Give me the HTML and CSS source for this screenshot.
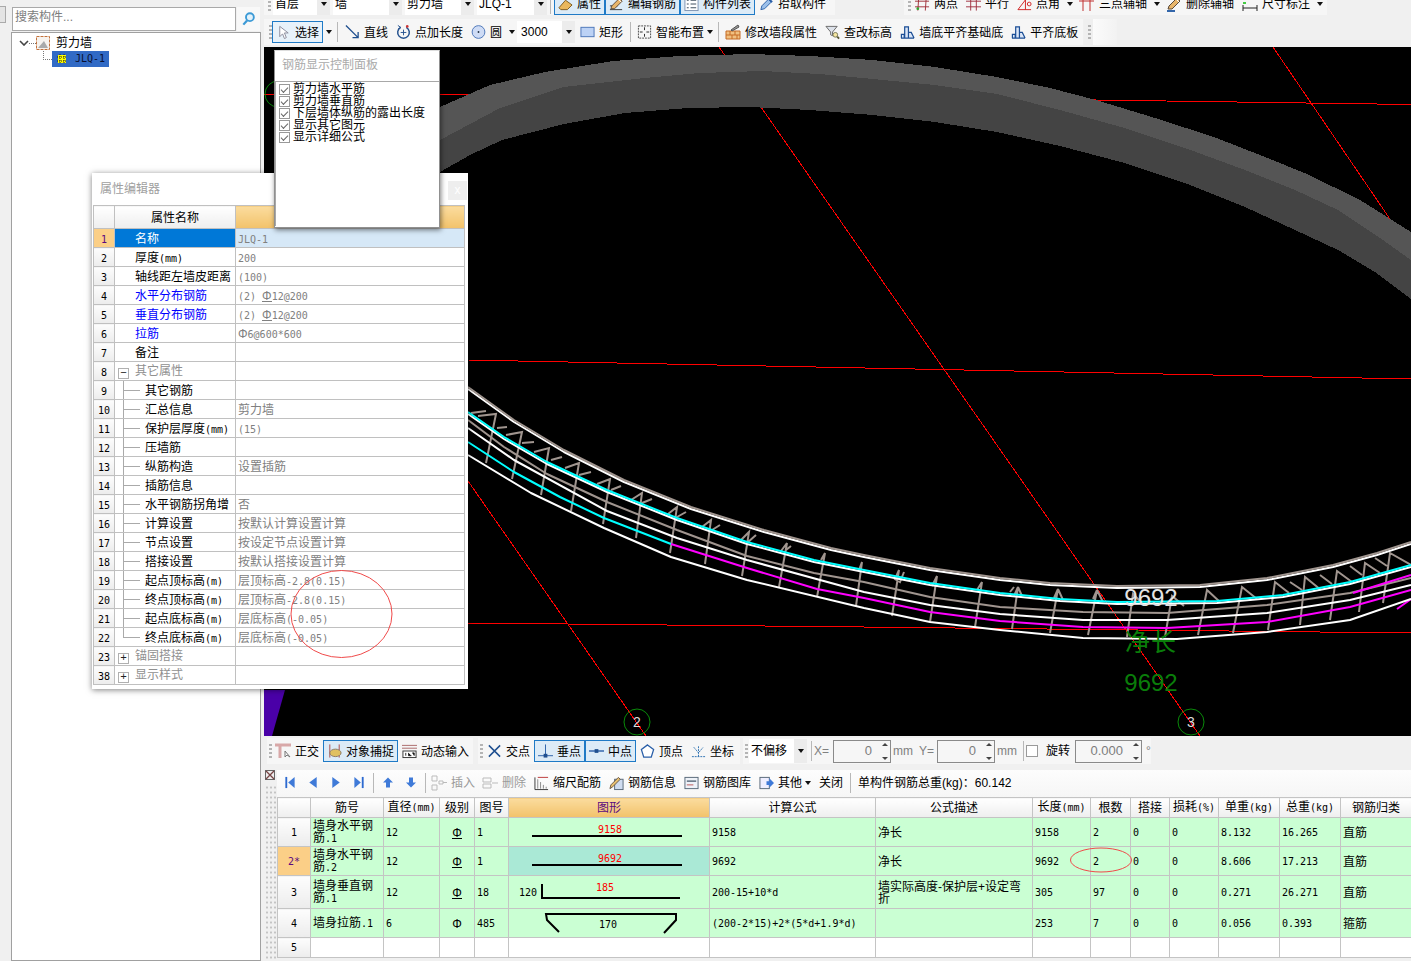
FILE: index.html
```html
<!DOCTYPE html>
<html lang="zh-CN">
<head>
<meta charset="utf-8">
<title>钢筋编辑</title>
<link rel="stylesheet" href="styles.css">
</head>
<body>
<svg class="defs" width="0" height="0" aria-hidden="true">
  <symbol id="i-wall" viewBox="0 0 16 16"><path d="M1 14.5h14M1.5 14.5v-4h3v4M5 14.5V2.5h4v12M9 14.5v-6h3l3 6" fill="#dbe6f7" stroke="#1d4f96" stroke-width="1.3"/></symbol>
  <symbol id="i-pen" viewBox="0 0 16 16"><path d="M2 13l1-3 8-8 3 3-8 8z" fill="#e8b56a" stroke="#5a4a3a"/><path d="M10 3l3 3" stroke="#fff"/></symbol>
</svg>

<aside class="side">
  <div class="strip"><div class="stub"></div></div>
  <div class="nav-panel">
    <div class="search">
      <div class="search-box">搜索构件...</div>
      <div class="search-btn"><svg class="ic" viewBox="0 0 16 16"><circle cx="9.5" cy="6" r="4.2" fill="#e3f2fb" stroke="#3c9ad6" stroke-width="2"/><path d="M6.5 9.5L2.5 14" stroke="#3c9ad6" stroke-width="2.4"/></svg></div>
    </div>
    <div class="tree">
      <div class="tree-root">
        <svg class="chev" viewBox="0 0 10 6"><path d="M1 1l4 4 4-4" fill="none" stroke="#444" stroke-width="1.6"/></svg>
        <span class="dots"></span>
        <svg class="ic14" viewBox="0 0 14 14"><rect x=".5" y=".5" width="13" height="13" fill="#f7f3ee" stroke="#c2703a" stroke-dasharray="3 1"/><path d="M2 12L8 5l4 7z" fill="#aaa"/></svg>
        <span class="tree-name">剪力墙</span>
      </div>
      <div class="tree-child">
        <span class="elbow"></span>
        <div class="tree-sel">
          <svg class="ic10" viewBox="0 0 10 10"><rect x="1" y="1" width="8" height="8" fill="#ff0"/><path d="M3 0v10M7 0v10M0 3h10M0 7h10" stroke="#222" stroke-dasharray="1 1"/></svg>
          <span class="n tree-id">JLQ-1</span>
        </div>
      </div>
    </div>
  </div>
</aside>

<main class="main">
  <div class="tb1">
    <div class="group g1a">
      <span class="grip"></span>
      <div class="combo w57 ml2"><span>首层</span><i class="drop"></i></div>
      <div class="combo w69 ml3"><span>墙</span><i class="drop"></i></div>
      <div class="combo w69 ml3"><span>剪力墙</span><i class="drop"></i></div>
      <div class="combo w70 ml3"><span>JLQ-1</span><i class="drop"></i></div>
      <span class="sep"></span>
      <div class="tool on"><svg class="ic" viewBox="0 0 16 16"><path d="M1 12l7-8 7 5-5 5H3z" fill="#e9b75c" stroke="#7a5a20"/></svg>属性</div>
      <div class="tool on"><svg class="ic" viewBox="0 0 16 16"><path d="M1 14h13M1 10h8" stroke="#333"/><use href="#i-pen"/></svg>编辑钢筋</div>
      <div class="tool on"><svg class="ic" viewBox="0 0 16 16"><rect x="1" y="1" width="14" height="14" fill="#fff" stroke="#7a90b0"/><path d="M3 4h2M3 8h2M3 12h2M7 4h6M7 8h6M7 12h6" stroke="#345"/></svg>构件列表</div>
      <div class="tool"><svg class="ic" viewBox="0 0 16 16"><path d="M2 14l1-4 7-7 3 3-7 7z" fill="#9cc0ea" stroke="#2a5fa8"/><path d="M10 2l4 4" stroke="#2a5fa8" stroke-width="2"/></svg>拾取构件</div>
    </div>
    <div class="group g1b">
      <span class="grip"></span>
      <div class="tool"><svg class="ic" viewBox="0 0 16 16"><path d="M4 1l-1 14M12 1l-1 14M0 5h15M0 11h15" stroke="#a0303a"/><circle cx="3" cy="13" r="1.5" fill="#3a3"/></svg>两点</div>
      <div class="tool"><svg class="ic" viewBox="0 0 16 16"><path d="M5 1v14M11 1v14M0 5h16M0 11h16" stroke="#a03040"/></svg>平行</div>
      <div class="tool"><svg class="ic" viewBox="0 0 16 16"><path d="M1 14L11 1M1 14h14M9 1v13" stroke="#d02020"/><circle cx="13" cy="8" r="2" fill="none" stroke="#d02020"/></svg>点角</div>
      <i class="arrow"></i>
      <div class="tool"><svg class="ic i16" viewBox="0 0 16 16"><path d="M4 1v14M11 1v14M0 5h15" stroke="#c03030"/></svg>三点辅轴</div>
      <i class="arrow"></i>
      <div class="tool"><svg class="ic i16" viewBox="0 0 16 16"><use href="#i-pen"/><path d="M1 15h8" stroke="#36a" stroke-width="2"/></svg>删除辅轴</div>
      <div class="tool"><svg class="ic i16" viewBox="0 0 16 16"><path d="M1 9v6M15 9v6M1 12h14" stroke="#222"/><rect x="1" y="1" width="3" height="3" fill="#4c4"/><rect x="1" y="6" width="3" height="2" fill="#4c4"/></svg>尺寸标注</div>
      <i class="arrow"></i>
    </div>
  </div>

  <div class="tb2">
    <div class="group g2a">
      <span class="grip"></span>
      <div class="tool on sel"><svg class="ic" viewBox="0 0 16 16"><path d="M4 2v11l3-3 2 5 2-1-2-5h4z" fill="#fff" stroke="#8a8a9a"/></svg>选择</div>
      <i class="arrow"></i>
      <span class="sep"></span>
      <div class="tool"><svg class="ic" viewBox="0 0 16 16"><path d="M1 1l13 13M14 8v6H8" fill="none" stroke="#1f4f8f" stroke-width="1.4"/></svg>直线</div>
      <div class="tool"><svg class="ic" viewBox="0 0 16 16"><path d="M5 3a6.2 6.2 0 1 0 6 0" fill="none" stroke="#25528f" stroke-width="1.6"/><path d="M5 8.500h6M8 5.500v6" stroke="#25528f"/><path d="M2 1l3 2-3 2" fill="none" stroke="#25528f"/><circle cx="12" cy="2" r="1.400" fill="#c33"/></svg>点加长度</div>
      <div class="tool"><svg class="ic" viewBox="0 0 16 16"><circle cx="8" cy="8" r="6.800" fill="#cfdcf5" stroke="#4a74b8"/><circle cx="8" cy="8" r="1" fill="#234"/></svg>圆</div>
      <i class="arrow"></i>
      <div class="combo w58"><span>3000</span><i class="drop"></i></div>
      <div class="tool ml1"><svg class="ic" viewBox="0 0 16 16"><rect x="1" y="3" width="14" height="10" fill="#bcd2f5" stroke="#4a74b8"/></svg>矩形</div>
      <span class="sep sep2"></span>
      <div class="tool np"><svg class="ic" viewBox="0 0 16 16"><rect x="1.500" y="1.500" width="13" height="13" fill="none" stroke="#444" stroke-dasharray="2 1"/><path d="M8 3v3M8 10v3M3 8h3M10 8h3" stroke="#222"/></svg>智能布置</div>
      <i class="arrow"></i>
      <span class="sep sep2"></span>
      <div class="tool"><svg class="ic i16" viewBox="0 0 16 16"><path d="M1 7h14v8H1z" fill="#f0c080" stroke="#c56a25"/><path d="M1 11h14M5 7v4M10 7v4M7 11v4M12 11v4" stroke="#c56a25"/><path d="M6 6l7-5 1 2-7 4z" fill="#999" stroke="#555"/></svg>修改墙段属性</div>
      <div class="tool"><svg class="ic" viewBox="0 0 16 16"><path d="M1 2h12L8 8v4L6 11V8z" fill="#dde2ea" stroke="#666"/><circle cx="11" cy="11" r="2.500" fill="#f5e6a0" stroke="#775"/><path d="M13 13l2 2" stroke="#553" stroke-width="2"/></svg>查改标高</div>
      <div class="tool"><svg class="ic" viewBox="0 0 16 16"><use href="#i-wall"/></svg>墙底平齐基础底</div>
      <div class="tool"><svg class="ic" viewBox="0 0 16 16"><use href="#i-wall"/></svg>平齐底板</div>
    </div>
    <div class="group g2b"><span class="grip"></span><span class="blank"></span></div>
  </div>

  <div class="canvas">
    <svg class="scene" width="1147" height="689" viewBox="264 47 1147 689">
      <g class="red">
        <path d="M719 47L1200 736M1273 47L1411 250M468 481L646 736"/>
        <path d="M264 94H440L1096 100 1411 104.500M468 360L1411 379M468 623L864 627 1411 633"/>
      </g>
      <circle class="ring" cx="278" cy="94" r="13"/>
      <polygon class="purple" points="264,690 285,690 272,736 264,736"/>
      <path class="band-top" d="M440 107L490 85 545 72 613 61 680 56 750 54 810 56 873 60 935 67 997 77 1050 88 1096 100 1155 118 1214 137 1260 155 1307 174 1360 200 1411 232V260L1380 238 1338 210 1295 190 1245 170 1185 148 1121 127 1060 110 997 94 935 85 873 79 820 74 762 71 700 73 644 78 564 87 500 108 440 140z"/>
      <path class="band-low" d="M440 140L500 108 564 87 644 78 700 73 762 71 820 74 873 79 935 85 997 94 1060 110 1121 127 1185 148 1245 170 1295 190 1338 210 1380 238 1411 260V299L1375 272 1338 250 1295 230 1245 207 1185 183 1121 162 1060 146 997 132 935 122 873 115 810 110 750 107 688 108 625 113 564 124 502 140 470 155 440 172z"/>

      <path class="tie" d="M486 463L496 414l-18 2M471 413l15-2M512 479L522 432l-16 3M497 428l10-1M541 495L549 448l-15 4M522 443l12-1M571 511L579 463l-14 5M551 460l11-3M603 524L610 479l-13 5M579 475l12-3M636 538L642 493l-11 7M611 490l10-4M670 553L677 507l-9 7M642 503l10-4M705 564L711 520l-9 7M677 517l9-5M742 576L749 532l-8 8M712 530l8-5M779 587L787 543l-6 8M747 543l9-8M817 597L825 553l-4 7M786 550l5-4M856 606L862 562l-3 8M892 616L899 570l-4 9 5 3 4-10M930 622L937 576l-5 10M975 627L982 582l-5 8M1012 629L1018 587l-4 9M1018 587l4 9M1010 592l4-5M1050 633L1058 589l-4 9M1058 589l5 11M1088 635L1097 590l-4 9M1097 590l6 12M1127 637L1133 594l9 9M1165 637L1172 596l12 10M1198 635L1207 590l13 12M1233 633L1242 587l15 12M1268 630L1275 582l14 11M1290 582l12 8M1300 625L1305 577l16 13M1320 575l12 9M1330 620L1337 571l15 11M1350 566l12 9M1359 612L1365 563l15 10M1375 558l12 8M1383 603L1390 553l21 12"/>

      <polyline class="wh3" points="468,389 514,422 564,452 624,482 691,509 764,532 831,550 864,557 930,570 1000,580 1050,585 1117,588 1200,587 1267,580 1333,567 1377,555 1411,544"/>
      <polyline class="grey" points="468,387 514,420 564,450 624,480 691,507 764,530 831,548 864,555 930,568 1000,578 1050,583 1117,586 1200,585 1267,578 1333,565 1377,553 1411,542"/>
      <polyline class="wh" points="468,414 504,439 547,464 607,492 677,520 747,544 814,562 864,572 930,585 1000,595 1060,601 1117,604 1217,603 1283,597 1350,584 1411,567"/>
      <polyline class="cy" points="468,412 504,437 547,462 607,490 677,518 747,542 814,560 864,570 930,583 1000,593 1060,599 1117,602 1217,601 1283,595 1350,582 1411,565"/>
      <polyline class="grey" points="468,420 504,447 547,474 607,502 677,530 747,556 814,573 864,582 930,597 1000,607 1083,612 1167,613 1267,605 1350,593 1411,578"/>
      <polyline class="wh" points="468,428 514,460 607,511 677,538 747,560 864,592 930,605 1000,614 1083,620 1167,620 1267,613 1350,600 1411,585"/>
      <polyline class="cy" points="468,442 514,472 560,497 604,518 671,544"/>
      <polyline class="mg" points="671,544 747,568 817,589 864,598 930,612 1000,621 1083,627 1167,628 1267,622 1350,607 1411,590"/>
      <polyline class="mg" points="1353,593 1411,575"/>
      <polyline class="mg" points="1397,609 1411,599"/>
      <polyline class="wh" points="468,455 531,493 604,528 671,557 747,580 864,608 930,622 1000,630 1083,638 1177,639 1267,632 1350,620 1411,599"/>

      <text class="dim" x="1151" y="606">9692</text>
      <text class="lbl" x="1151" y="651">净长</text>
      <text class="lbl digits" x="1151" y="691">9692</text>
      <circle class="ring" cx="637" cy="722" r="13"/>
      <circle class="ring" cx="1191" cy="722" r="13"/>
      <text class="axis" x="637" y="727">2</text>
      <text class="axis" x="1191" y="727">3</text>
    </svg>
  </div>

  <div class="tb3">
    <div class="group g3a">
      <span class="grip tight"></span>
      <div class="tool"><svg class="ic i16" viewBox="0 0 16 16"><path d="M0 2h16M5 2v13" stroke="#d8a8a8" stroke-width="3"/><path d="M10 8v6l2-2 3 2z" fill="#fff" stroke="#777"/></svg>正交</div>
      <div class="tool on"><svg class="ic" viewBox="0 0 16 16"><path d="M3 1v14M13 1v14" stroke="#a44"/><ellipse cx="9" cy="10" rx="6" ry="4" fill="#e0c060" stroke="#876"/></svg>对象捕捉</div>
      <div class="tool"><svg class="ic" viewBox="0 0 16 16"><path d="M0 2h16M0 5h16" stroke="#a66"/><rect x="1" y="8" width="14" height="7" fill="#fff" stroke="#333"/><path d="M4 10v3M7 10v3h3M11 10h2v3" stroke="#222"/></svg>动态输入</div>
    </div>
    <div class="group g3b">
      <span class="grip"></span>
      <div class="tool"><svg class="ic" viewBox="0 0 16 16"><path d="M2 2l12 12M14 2L2 14" stroke="#1f4f8f" stroke-width="1.600"/></svg>交点</div>
      <div class="tool on"><svg class="ic" viewBox="0 0 16 16"><path d="M0 13h16M8 1v12" stroke="#2a5fa8"/><rect x="6" y="11" width="4" height="4" fill="#1f4f8f"/></svg>垂点</div>
      <div class="tool on"><svg class="ic" viewBox="0 0 16 16"><path d="M0 8h16" stroke="#2a5fa8" stroke-width="1.500"/><rect x="6" y="6" width="4" height="4" fill="#1f4f8f"/></svg>中点</div>
      <div class="tool"><svg class="ic" viewBox="0 0 16 16"><path d="M8 1.500l6.500 5-2.500 8H4l-2.500-8z" fill="#fff" stroke="#2a5fa8" stroke-width="1.400"/></svg>顶点</div>
      <div class="tool"><svg class="ic" viewBox="0 0 16 16"><path d="M1 14h14M8 14V2M3 4l5 6 5-6" fill="none" stroke="#2a6fb0" stroke-dasharray="2 1"/></svg>坐标</div>
    </div>
    <div class="group g3c">
      <span class="grip"></span>
      <div class="combo w58 ml1 tall"><span>不偏移</span><i class="drop"></i></div>
      <span class="sep sep2 ml4"></span>
      <span class="mute">X=</span>
      <div class="spin w58 ml4"><span class="val">0</span><span class="spins"><i class="up"></i><i class="dn"></i></span></div>
      <span class="mute ml2">mm</span>
      <span class="mute ml6">Y=</span>
      <div class="spin w58 ml3"><span class="val">0</span><span class="spins"><i class="up"></i><i class="dn"></i></span></div>
      <span class="mute ml2">mm</span>
      <span class="sep sep2 ml6"></span>
      <span class="check"></span>
      <span class="label ml8">旋转</span>
      <div class="spin w67 ml5"><span class="val">0.000</span><span class="spins"><i class="up"></i><i class="dn"></i></span></div>
      <span class="mute ml4">°</span>
    </div>
  </div>

  <div class="lower">
    <div class="dock">
      <svg class="dock-x" viewBox="0 0 10 10"><rect x=".5" y=".5" width="9" height="9" fill="#eee" stroke="#666"/><path d="M1 1l8 8M9 1L1 9" stroke="#744" stroke-width="1.300"/></svg>
      <div class="dock-dots"></div>
    </div>
    <div class="sheet">
      <div class="tb4">
        <div class="nav"><svg class="ic10" viewBox="0 0 10 14"><path d="M1 1v12" stroke="#2d6ad0" stroke-width="2"/><path d="M10 1L3 7l7 6z" fill="#3f7ad8"/></svg></div>
        <div class="nav"><svg class="ic10" viewBox="0 0 10 14"><path d="M9 1L1 7l8 6z" fill="#3f7ad8"/></svg></div>
        <div class="nav"><svg class="ic10" viewBox="0 0 10 14"><path d="M1 1l8 6-8 6z" fill="#3f7ad8"/></svg></div>
        <div class="nav"><svg class="ic10" viewBox="0 0 10 14"><path d="M9 1v12" stroke="#2d6ad0" stroke-width="2"/><path d="M0 1l7 6-7 6z" fill="#3f7ad8"/></svg></div>
        <span class="sep sep2"></span>
        <div class="nav"><svg class="ic10" viewBox="0 0 10 10"><path d="M5 0l5 5H7v5H3V5H0z" fill="#3f7ad8"/></svg></div>
        <div class="nav"><svg class="ic10" viewBox="0 0 10 10"><path d="M5 10l5-5H7V0H3v5H0z" fill="#3f7ad8"/></svg></div>
        <span class="sep sep2"></span>
        <div class="tool gray mln1"><svg class="ic i16" viewBox="0 0 16 16"><path d="M1 1h5v5H1zM1 10h5v5H1zM8 6h4v3H8zM12 7.500h4" fill="none" stroke="#bbb"/></svg>插入</div>
        <div class="tool gray mln1"><svg class="ic i16" viewBox="0 0 16 16"><path d="M1 3h8v4H1zM1 9h8v4H1zM10 8h6" fill="none" stroke="#bbb"/></svg>删除</div>
        <div class="tool"><svg class="ic" viewBox="0 0 16 16"><path d="M1 2v13h14" fill="none" stroke="#333"/><path d="M4 4v10M7 7v7M10 10v4M13 12v2" stroke="#888"/><path d="M4 2h11" stroke="#b33"/></svg>缩尺配筋</div>
        <div class="tool"><svg class="ic" viewBox="0 0 16 16"><rect x="6" y="4" width="9" height="11" fill="#cfdcf0" stroke="#567"/><path d="M1 14l1-4 8-8 2 2-8 8z" fill="#e8c070" stroke="#654"/></svg>钢筋信息</div>
        <div class="tool"><svg class="ic" viewBox="0 0 16 16"><rect x="1" y="2" width="14" height="12" fill="#eef2f8" stroke="#567"/><path d="M3 6h10" stroke="#567" stroke-width="1.500"/><path d="M3 10h7" stroke="#b55"/></svg>钢筋图库</div>
        <div class="tool np"><svg class="ic" viewBox="0 0 16 16"><rect x="1" y="2" width="10" height="12" fill="#eef" stroke="#567"/><path d="M8 6h3V3l5 5-5 5v-3H8z" fill="#3f7ad8"/></svg>其他</div>
        <i class="arrow"></i>
        <div class="tool ml2">关闭</div>
        <span class="sep"></span>
        <span class="total">单构件钢筋总重(kg)：60.142</span>
      </div>

      <table class="bars">
        <colgroup><col class="c33"><col class="c73"><col class="c56"><col class="c35"><col class="c34"><col class="c201"><col class="c166"><col class="c157"><col class="c58"><col class="c40"><col class="c39"><col class="c49"><col class="c61"><col class="c61"><col class="c71"></colgroup>
        <thead>
          <tr class="rh">
            <th></th><th>筋号</th><th>直径<span class="n">(mm)</span></th><th>级别</th><th>图号</th><th class="hot">图形</th><th>计算公式</th><th>公式描述</th><th>长度<span class="n">(mm)</span></th><th>根数</th><th>搭接</th><th>损耗<span class="n">(%)</span></th><th>单重<span class="n">(kg)</span></th><th>总重<span class="n">(kg)</span></th><th>钢筋归类</th>
          </tr>
        </thead>
        <tbody>
          <tr class="r29 data">
            <td class="num">1</td><td class="nm lh">墙身水平钢<br>筋<span class="n">.1</span></td><td class="n bl">12</td><td class="ctr"><span class="rb foot">Φ</span></td><td class="n">1</td>
            <td class="pic"><svg width="200" height="28" viewBox="509 818 200 28"><path class="bar" d="M532 836H682"/><text class="rd" x="610" y="833">9158</text></svg></td>
            <td class="n">9158</td><td>净长</td><td class="n">9158</td><td class="n">2</td><td class="n">0</td><td class="n">0</td><td class="n">8.132</td><td class="n">16.265</td><td>直筋</td>
          </tr>
          <tr class="r29 data">
            <td class="num cur">2*</td><td class="nm lh">墙身水平钢<br>筋<span class="n">.2</span></td><td class="n bl">12</td><td class="ctr"><span class="rb foot">Φ</span></td><td class="n">1</td>
            <td class="pic selcell"><svg width="200" height="28" viewBox="509 847 200 28"><path class="bar" d="M532 865H682"/><text class="rd" x="610" y="862">9692</text></svg></td>
            <td class="n">9692</td><td>净长</td><td class="n">9692</td><td class="n">2</td><td class="n">0</td><td class="n">0</td><td class="n">8.606</td><td class="n">17.213</td><td>直筋</td>
          </tr>
          <tr class="r33 data">
            <td class="num">3</td><td class="nm lh">墙身垂直钢<br>筋<span class="n">.1</span></td><td class="n bl">12</td><td class="ctr"><span class="rb foot">Φ</span></td><td class="n">18</td>
            <td class="pic"><svg width="200" height="32" viewBox="509 876 200 32"><path class="bar" d="M542 884V898H680"/><text class="bk" x="528" y="896">120</text><text class="rd" x="605" y="891">185</text></svg></td>
            <td class="n">200-15+10*d</td><td class="lh">墙实际高度-保护层+设定弯<br>折</td><td class="n">305</td><td class="n">97</td><td class="n">0</td><td class="n">0</td><td class="n">0.271</td><td class="n">26.271</td><td>直筋</td>
          </tr>
          <tr class="r29 data">
            <td class="num">4</td><td class="nm">墙身拉筋<span class="n">.1</span></td><td class="n bl">6</td><td class="ctr"><span class="rb">Φ</span></td><td class="n">485</td>
            <td class="pic"><svg width="200" height="28" viewBox="509 909 200 28"><path class="bar" d="M559 932L547 920 546 914H676V920L664 933"/><text class="bk" x="608" y="928">170</text></svg></td>
            <td class="n">(200-2*15)+2*(5*d+1.9*d)</td><td></td><td class="n">253</td><td class="n">7</td><td class="n">0</td><td class="n">0</td><td class="n">0.056</td><td class="n">0.393</td><td>箍筋</td>
          </tr>
          <tr class="r20">
            <td class="num">5</td><td></td><td class="bl"></td><td></td><td></td><td></td><td></td><td></td><td></td><td></td><td></td><td></td><td></td><td></td><td></td>
          </tr>
        </tbody>
      </table>
    </div>
  </div>
</main>

<section class="dialog">
  <div class="dlg-title"><span>属性编辑器</span><span class="dlg-close">x</span></div>
  <table class="props">
    <colgroup><col class="p21"><col class="p121"><col class="p229"></colgroup>
    <thead><tr class="ph"><th></th><th>属性名称</th><th class="hot"></th></tr></thead>
    <tbody>
      <tr class="sel-row"><td class="num cur">1</td><td class="pn on-name">名称</td><td class="pv n">JLQ-1</td></tr>
      <tr><td class="num">2</td><td class="pn">厚度<span class="n">(mm)</span></td><td class="pv n">200</td></tr>
      <tr><td class="num">3</td><td class="pn">轴线距左墙皮距离</td><td class="pv n">(100)</td></tr>
      <tr><td class="num">4</td><td class="pn link">水平分布钢筋</td><td class="pv n">(2) <span class="rb foot">Φ</span>12@200</td></tr>
      <tr><td class="num">5</td><td class="pn link">垂直分布钢筋</td><td class="pv n">(2) <span class="rb foot">Φ</span>12@200</td></tr>
      <tr><td class="num">6</td><td class="pn link">拉筋</td><td class="pv n"><span class="rb">Φ</span>6@600*600</td></tr>
      <tr><td class="num">7</td><td class="pn">备注</td><td class="pv"></td></tr>
      <tr><td class="num">8</td><td class="pg"><span class="box">−</span>其它属性</td><td class="pv"></td></tr>
      <tr><td class="num">9</td><td class="pt">其它钢筋</td><td class="pv"></td></tr>
      <tr><td class="num">10</td><td class="pt">汇总信息</td><td class="pv">剪力墙</td></tr>
      <tr><td class="num">11</td><td class="pt">保护层厚度<span class="n">(mm)</span></td><td class="pv n">(15)</td></tr>
      <tr><td class="num">12</td><td class="pt">压墙筋</td><td class="pv"></td></tr>
      <tr><td class="num">13</td><td class="pt">纵筋构造</td><td class="pv">设置插筋</td></tr>
      <tr><td class="num">14</td><td class="pt">插筋信息</td><td class="pv"></td></tr>
      <tr><td class="num">15</td><td class="pt">水平钢筋拐角增</td><td class="pv">否</td></tr>
      <tr><td class="num">16</td><td class="pt">计算设置</td><td class="pv">按默认计算设置计算</td></tr>
      <tr><td class="num">17</td><td class="pt">节点设置</td><td class="pv">按设定节点设置计算</td></tr>
      <tr><td class="num">18</td><td class="pt">搭接设置</td><td class="pv">按默认搭接设置计算</td></tr>
      <tr><td class="num">19</td><td class="pt">起点顶标高<span class="n">(m)</span></td><td class="pv">层顶标高<span class="n">-2.8(0.15)</span></td></tr>
      <tr><td class="num">20</td><td class="pt">终点顶标高<span class="n">(m)</span></td><td class="pv">层顶标高<span class="n">-2.8(0.15)</span></td></tr>
      <tr><td class="num">21</td><td class="pt">起点底标高<span class="n">(m)</span></td><td class="pv">层底标高<span class="n">(-0.05)</span></td></tr>
      <tr><td class="num">22</td><td class="pt end">终点底标高<span class="n">(m)</span></td><td class="pv">层底标高<span class="n">(-0.05)</span></td></tr>
      <tr><td class="num">23</td><td class="pg"><span class="box">+</span>锚固搭接</td><td class="pv"></td></tr>
      <tr><td class="num">38</td><td class="pg"><span class="box">+</span>显示样式</td><td class="pv"></td></tr>
    </tbody>
  </table>
</section>

<section class="panel">
  <div class="panel-title">钢筋显示控制面板</div>
  <ul class="checks">
    <li><span class="cb"></span>剪力墙水平筋</li>
    <li><span class="cb"></span>剪力墙垂直筋</li>
    <li><span class="cb"></span>下层墙体纵筋的露出长度</li>
    <li><span class="cb"></span>显示其它图元</li>
    <li><span class="cb"></span>显示详细公式</li>
  </ul>
</section>

<svg class="marks" width="1411" height="961" viewBox="0 0 1411 961" aria-hidden="true">
  <ellipse cx="341.500" cy="614" rx="50.500" ry="43.500"/>
  <ellipse cx="1101" cy="860" rx="30.500" ry="12"/>
</svg>
</body>
</html>
```
FILE: styles.css
```css
* { box-sizing: border-box; }
html, body { margin: 0; padding: 0; }
body {
  position: relative;
  display: flex;
  width: 1411px;
  height: 961px;
  overflow: hidden;
  background: #f0f0f0;
  color: #000;
  font: 12px/16px "Liberation Sans", "Noto Sans CJK SC", sans-serif;
}
.defs { position: absolute; }
.n { font-family: "DejaVu Sans Mono", "Noto Sans CJK SC", monospace; font-size: 10px; }
.ic { flex: none; width: 15px; height: 16px; }
.i16 { width: 16px; }
.ic14 { flex: none; width: 14px; height: 14px; }
.ic10 { flex: none; width: 10px; height: 10px; }

/* left tree */
.side { flex: none; display: flex; width: 264px; }
.strip { flex: none; width: 11px; }
.stub { width: 6px; height: 17px; margin-top: 6px; background: #e4e4e4; border: 1px solid #aaa; border-left: 0; }
.nav-panel { flex: none; width: 250px; display: flex; flex-direction: column; }
.search { display: flex; height: 24px; margin: 7px 0 1px 1px; gap: 1px; }
.search-box { width: 224px; padding: 0 2px; border: 1px solid #a9a9a9; background: #fff; color: #7d7d7d; font-size: 12px; line-height: 19px; }
.search-btn { width: 23px; display: flex; align-items: center; justify-content: center; background: #f8f8f8; }
.tree { flex: 1; background: #fff; border: 1px solid #a0a0a0; padding-top: 3px; }
.tree-root { display: flex; align-items: center; height: 14px; padding-left: 7px; }
.chev { width: 10px; height: 6px; flex: none; }
.dots { width: 7px; height: 0; border-top: 1px dotted #777; }
.tree-name { margin-left: 6px; }
.tree-child { display: flex; margin-top: 1px; height: 16px; padding-left: 31px; }
.elbow { width: 9px; height: 9px; border-left: 1px dotted #777; border-bottom: 1px dotted #777; }
.tree-sel { display: flex; align-items: center; width: 57px; height: 16px; padding-left: 5px; background: #316ac5; }
.tree-id { margin-left: 8px; color: #0a1030; }

/* main column */
.main { flex: none; width: 1147px; display: flex; flex-direction: column; }
.group { display: flex; align-items: center; background: #f6f6f6; }
.grip { flex: none; width: 3px; height: 14px; margin-left: 2px; background: repeating-linear-gradient(#b4b4b4 0 2px, transparent 2px 4px); }
.grip.tight { margin-right: -1px; }
.sep { flex: none; width: 1px; height: 20px; margin: 0 3px; background: #b8b8b8; }
.sep2 { margin: 0 2px 0 3px; }
.tool { flex: none; display: flex; align-items: center; gap: 4px; height: 22px; padding: 0 4px; white-space: nowrap; }
.tool.np { padding-right: 0; }
.tool.on { background: #dcebf7; border: 1px solid #1f7ac6; padding: 0 3px; }
.tool.sel { background: #e8f2fa; }
.tool.gray { color: #9a9a9a; }
.tb2 .tool, .tb3 .tool { padding-top: 2px; }
.tb2 .tool .ic, .tb3 .tool .ic { margin-top: -2px; }
.arrow { flex: none; display: block; width: 11px; height: 4px; }
.arrow::before, .drop::before { content: ""; display: block; width: 0; height: 0; margin: 0 auto; border: 3.5px solid transparent; border-top: 4px solid #111; border-bottom: 0; }
.combo { flex: none; display: flex; align-items: center; justify-content: space-between; height: 22px; padding-left: 2px; background: #fff; overflow: hidden; white-space: nowrap; }
.combo .drop { align-self: stretch; display: flex; align-items: center; width: 13px; background: #ececec; }
.w57 { width: 57px; } .w58 { width: 58px; } .w67 { width: 67px; } .w69 { width: 69px; } .w70 { width: 70px; }
.ml1 { margin-left: 1px; } .ml2 { margin-left: 2px; } .ml3 { margin-left: 3px; } .ml4 { margin-left: 4px; } .ml5 { margin-left: 5px; } .ml6 { margin-left: 6px; } .ml8 { margin-left: 8px; }
.mln1 { margin-left: -1px; }

.tb1 { flex: none; display: flex; align-items: flex-end; height: 15px; overflow: hidden; }
.tb1 .group { height: 22px; flex: none; }
.g1a { width: 571px; padding-left: 2px; }
.g1b { width: 423px; margin-left: 69px; padding-left: 2px; }
.tb2 { flex: none; display: flex; align-items: center; height: 26px; margin: 4px 0 2px; }
.tb2 .group { height: 26px; }
.g2a { width: 819px; padding-left: 3px; }
.g2a .combo { padding-left: 4px; }
.g2b { width: 33px; margin-left: 1px; padding-left: 2px; background: #efefef; }
.blank { width: 24px; height: 26px; margin-left: 2px; background: linear-gradient(90deg, #fbfbfb, #f2f2f2); }

.canvas { flex: none; height: 689px; background: #000; }
.scene { display: block; }
.red { fill: none; stroke: #f00; stroke-width: 1; shape-rendering: crispEdges; }
.ring { fill: none; stroke: #0a8a0a; stroke-width: 1; }
.purple { fill: #4a00a8; }
.band-top { fill: #555; shape-rendering: crispEdges; }
.band-low { fill: #444; shape-rendering: crispEdges; }
.tie { fill: none; stroke: #a0958f; stroke-width: 2; }
.grey, .wh, .wh3, .cy, .mg { fill: none; stroke-width: 2; stroke-linejoin: round; }
.grey { stroke: #a0958f; }
.wh, .wh3 { stroke: #fff; }
.cy { stroke: #0ff; }
.mg { stroke: #f0f; }
.dim, .lbl, .axis { text-anchor: middle; }
.dim { fill: #e4e4e4; font-size: 24px; }
.lbl { fill: #0a7d0a; font-size: 25px; letter-spacing: 1px; }
.lbl.digits { font-size: 24px; letter-spacing: 0; }
.axis { fill: #ddd; font-size: 14px; }

.tb3 { flex: none; display: flex; height: 26px; margin: 2px 0 6px; }
.tb3 .group { height: 26px; flex: none; }
.g3a { width: 206px; margin-left: 3px; }
.g3b { width: 262px; margin-left: 5px; }
.g3c { width: 408px; margin-left: 3px; }
.g3c > span { flex: none; white-space: nowrap; }
.tall { height: 24px; }
.mute { color: #808080; }
.spin { flex: none; display: flex; align-items: center; justify-content: flex-end; height: 23px; border: 1px solid #8a8a8a; background: #f6f6f6; }
.val { color: #7d7d7d; font-size: 13px; margin-right: 8px; }
.spins { width: 10px; height: 17px; display: flex; flex-direction: column; justify-content: space-between; align-items: center; }
.up, .dn { display: block; width: 0; height: 0; border: 3px solid transparent; }
.up { border-top: 0; border-bottom: 3px solid #444; }
.dn { border-bottom: 0; border-top: 3px solid #444; }
.check { width: 12px; height: 12px; border: 1px solid #9a9a9a; background: #fff; flex: none; }

.lower { flex: 1; display: flex; min-height: 0; }
.dock { flex: none; width: 13px; padding-left: 1px; }
.dock-x { display: block; width: 10px; height: 10px; margin-bottom: 5px; }
.dock-dots { height: 176px; background: radial-gradient(circle, #c4c4c4 1px, transparent 1.2px) 0 0 / 4px 5px; }
.sheet { flex: 1; display: flex; flex-direction: column; }
.tb4 { flex: none; display: flex; align-items: center; height: 27px; padding: 0 0 2px 1px; background: linear-gradient(#fdfdfd, #f6f6f6); }
.nav { flex: none; width: 23px; display: flex; justify-content: center; align-items: center; }
.nav .ic10 { height: 13px; }
.total { margin-left: 4px; white-space: nowrap; }

table { border-collapse: collapse; table-layout: fixed; background: #fff; }
th, td { padding: 0 2px; border: 1px solid #c4c4c4; font-weight: 400; white-space: nowrap; overflow: hidden; vertical-align: middle; text-align: left; }
th { text-align: center; background: linear-gradient(#fff, #eee); }
.hot { background: linear-gradient(#fbdc9e, #f2c26a); color: #5a0a80; }
.num { text-align: center; background: linear-gradient(#fdfdfd, #ececec); font-family: "DejaVu Sans Mono", monospace; font-size: 10px; padding: 0; }
.num.cur { background: #fbcf87; color: #5a0a80; }
.ctr { text-align: center; }
.rb { display: inline-block; font-family: "Liberation Sans", sans-serif; font-size: 12px; line-height: 10px; }
.rb.foot { border-bottom: 1px solid currentColor; }

/* rebar grid */
.bars { width: 1134px; }
.c33 { width: 33px; } .c73 { width: 73px; } .c56 { width: 56px; } .c35 { width: 35px; } .c34 { width: 34px; } .c201 { width: 201px; } .c166 { width: 166px; } .c157 { width: 157px; } .c58 { width: 58px; } .c40 { width: 40px; } .c39 { width: 39px; } .c49 { width: 49px; } .c61 { width: 61px; } .c71 { width: 71px; }
.rh { height: 20px; }
.r29 { height: 29px; } .r33 { height: 33px; } .r20 { height: 20px; }
.data td:not(.num) { background: #caffd3; }
.data td:not(.pic) { padding-top: 1px; }
.data td.selcell { background: #aae9d6; }
.bl { border-left: 1px solid #000; }
.lh { line-height: 12px; }
.pic { padding: 0; }
.pic svg { display: block; }
.bar { fill: none; stroke: #000; stroke-width: 2; }
.rd, .bk { text-anchor: middle; font-family: "DejaVu Sans Mono", monospace; font-size: 10px; }
.rd { fill: #f00; } .bk { fill: #000; }

/* property dialog */
.dialog { position: absolute; left: 92px; top: 173px; width: 376px; height: 516px; background: #fff; box-shadow: 0 1px 6px rgba(0, 0, 0, .5); }
.dlg-title { display: flex; justify-content: space-between; height: 32px; padding: 8px 1px 0 8px; color: #a0a0a0; }
.dlg-close { width: 19px; height: 19px; text-align: center; background: #eee; color: #fff; line-height: 18px; }
.props { width: 371px; margin-left: 1px; border: 1px solid #b4b4b4; }
.props th, .props td { border-color: #c0c0c0; padding: 2px 2px 0; height: 19px; line-height: 13px; }
.p21 { width: 21px; } .p121 { width: 121px; } .p229 { width: 229px; }
.ph th { height: 23px; }
.props td.num { padding: 2px 0 0; }
.props td.pn { padding-left: 20px; }
.link { color: #00f; }
.pv { color: #808080; }
.sel-row .pv { background: #d6e8f7; }
.props td.on-name { background: #0078d7; color: #fff; }
.pg { color: #909090; }
.box { display: inline-block; width: 11px; height: 11px; margin: 0 6px 0 1px; border: 1px solid #b0b0b0; color: #222; font: 11px/9px "Liberation Mono", monospace; text-align: center; vertical-align: -1px; }
.props td.pt {
  padding-left: 30px;
  background: linear-gradient(#aaa, #aaa) 8px 0 / 1px 100% no-repeat, linear-gradient(#aaa, #aaa) 8px 50% / 17px 1px no-repeat;
}
.props td.pt.end { background: linear-gradient(#aaa, #aaa) 8px 0 / 1px 50% no-repeat, linear-gradient(#aaa, #aaa) 8px 50% / 17px 1px no-repeat; }

/* rebar display panel */
.panel { position: absolute; left: 274px; top: 50px; width: 166px; height: 178px; background: #fff; border: 1px solid #909090; border-top-color: #ddd; box-shadow: 1px 2px 5px rgba(0, 0, 0, .5); }
.panel-title { height: 30px; padding: 6px 0 0 7px; color: #aaa; }
.checks { list-style: none; height: 145px; margin: 0; padding: 1px 0 0 3px; border-top: 1px solid #a8a8a8; border-left: 1px solid #a8a8a8; }
.checks li { display: flex; align-items: center; gap: 3px; height: 12px; line-height: 12px; white-space: nowrap; }
.cb { flex: none; width: 11px; height: 11px; border: 1px solid #999; background: #fff; }
.cb::after { content: ""; display: block; width: 6px; height: 3px; margin: 2px 0 0 1px; border-left: 1.5px solid #666; border-bottom: 1.5px solid #666; transform: rotate(-45deg); }

.marks { position: absolute; left: 0; top: 0; pointer-events: none; fill: none; stroke: #f04a4a; stroke-width: 1; }
```
